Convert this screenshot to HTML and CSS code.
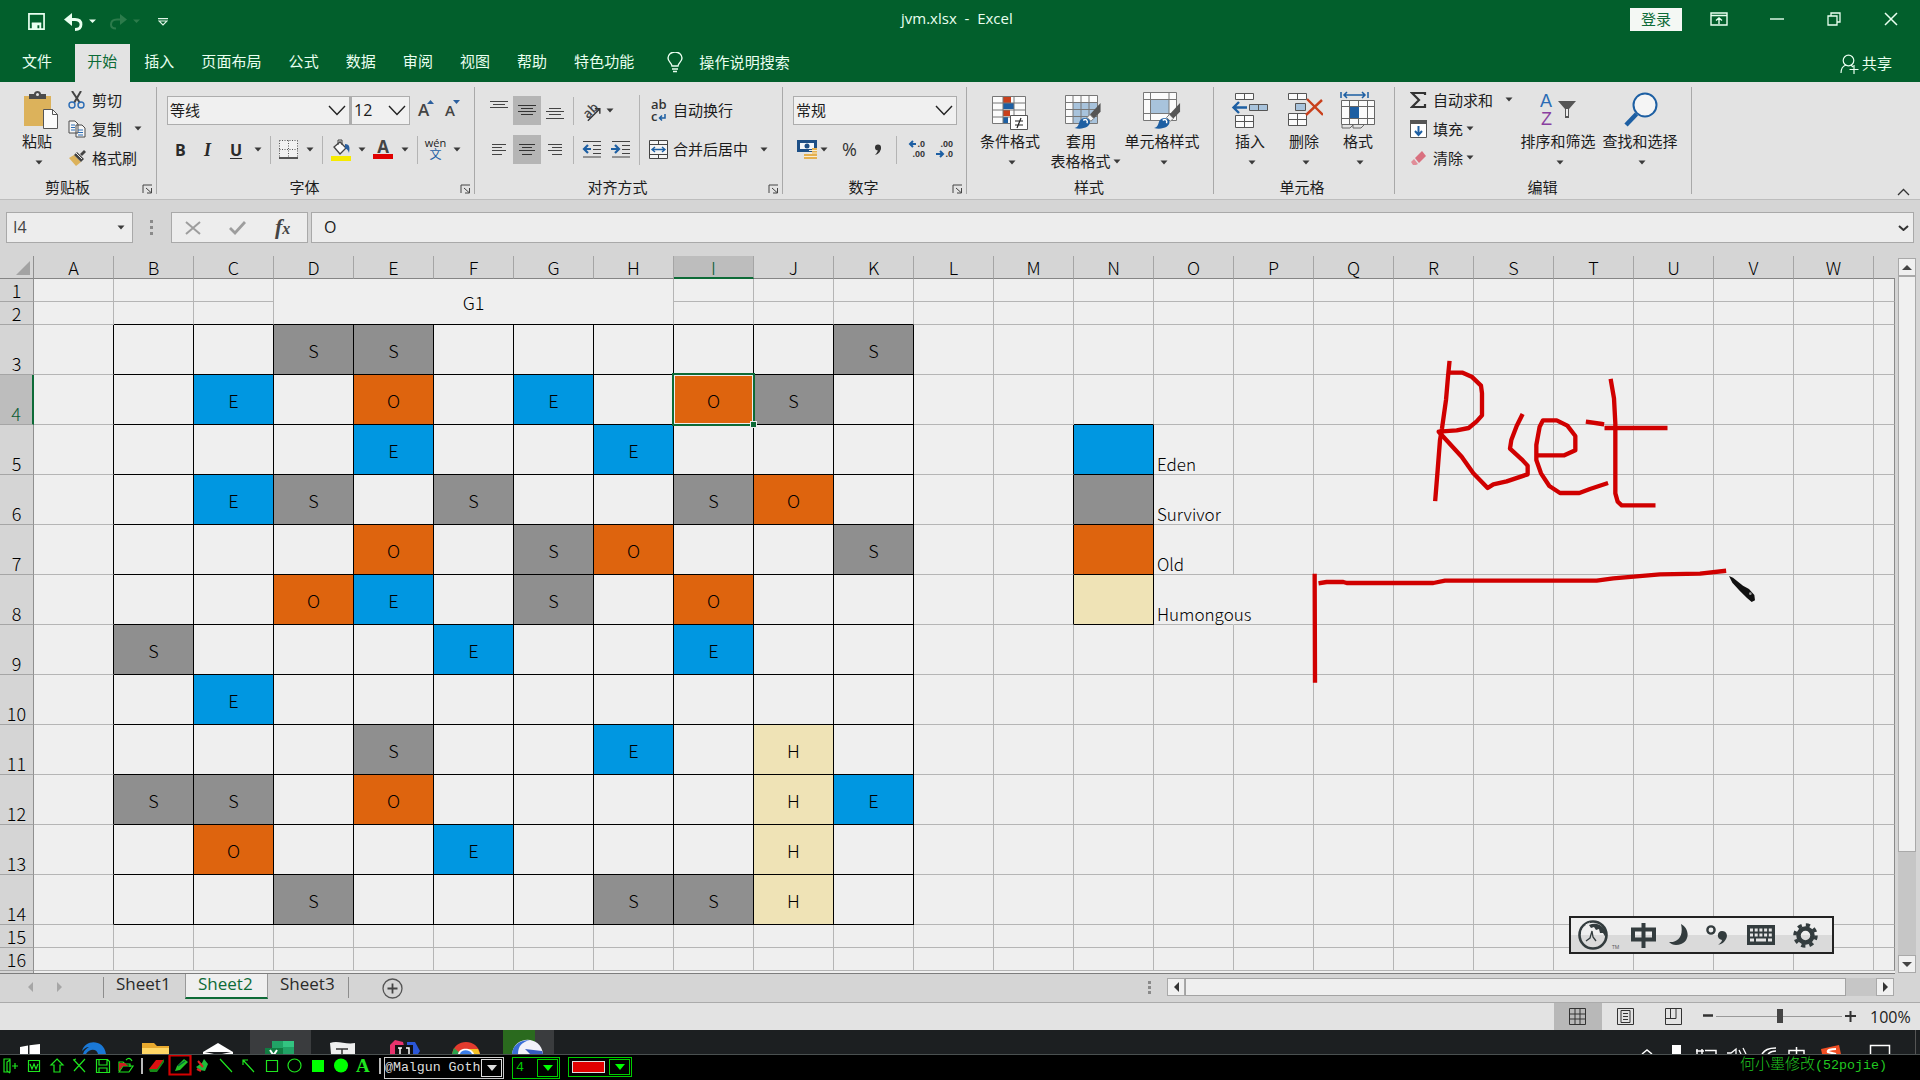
FILE: index.html
```html
<!DOCTYPE html>
<html lang="zh-CN">
<head>
<meta charset="utf-8">
<title>jvm.xlsx - Excel</title>
<link rel="stylesheet" href="styles.css">
</head>
<body>
<svg width="0" height="0" class="defs">
  <symbol id="caret" viewBox="0 0 8 5"><path d="M.5.5h7L4 4.5z" fill="#3a3a3a"/></symbol>
  <symbol id="launch" viewBox="0 0 11 10"><path d="M1 9V1h9M4 4l5 4.500M9.500 4v5H5" fill="none" stroke="#444"/></symbol>
  <symbol id="chev" viewBox="0 0 18 11"><path d="M1 1l8 8.500L17 1" fill="none" stroke="#222" stroke-width="1.400"/></symbol>
  <symbol id="brush" viewBox="0 0 28 28"><path d="M27 0v9l-7 7-4-4z" fill="#555"/><path d="M16 12l4 4-3 3-4-4z" fill="#f4f4f4" stroke="#777"/><path d="M0 26c5-1 4-5 6-8 3-4 9-3 10 1 1 6-8 9-16 7z" fill="#1d5fa3"/><path d="M9 18c3-2 5 0 4 3" fill="none" stroke="#fff" stroke-width="1.500"/></symbol>
</svg>

<header class="titlebar">
  <div class="qat">
    <svg width="17" height="17" viewBox="0 0 18 18"><path d="M1 1h16v16H1zM4 11h10" fill="none" stroke="#e9fff0" stroke-width="1.800"/><path d="M4 11h10v6h-2v-4h-2v4H4z" fill="#e9fff0"/></svg>
    <svg width="19" height="18" viewBox="0 0 19 18"><path d="M0 6.500L8 0v13z" fill="#e9fff0"/><path d="M5 6.500h6c4 0 6 2 6 5 0 3-2 5-6 5" fill="none" stroke="#e9fff0" stroke-width="2.800"/></svg>
    <svg width="7" height="5" viewBox="0 0 7 5"><path d="M0 .5h7L3.500 4z" fill="#e9fff0"/></svg>
    <svg width="19" height="18" viewBox="0 0 19 18"><path d="M18 6.500L11 1v11z" fill="#2c7b4b"/><path d="M14 6.500H8c-4 0-6 2-6 5 0 3 2 4 5 4" fill="none" stroke="#2c7b4b" stroke-width="2"/></svg>
    <svg width="7" height="5" viewBox="0 0 7 5"><path d="M0 .5h7L3.500 4z" fill="#2c7b4b"/></svg>
    <svg width="10" height="8" viewBox="0 0 10 8"><path d="M0 .7h10M1 3h8L5 7z" fill="none" stroke="#dff5e6" stroke-width="1.200"/></svg>
  </div>
  <div class="doc">jvm.xlsx &nbsp;-&nbsp; Excel</div>
  <div class="winctl">
    <span class="login">登录</span>
    <svg width="18" height="14" viewBox="0 0 18 14"><path d="M1 1h16v12H1zM1 3.500h16M9 12V6M6 8.500L9 6l3 2.500" fill="none" stroke="#e9fff0" stroke-width="1.400"/></svg>
    <svg width="14" height="14" viewBox="0 0 14 14"><path d="M0 7h14" stroke="#e9fff0" stroke-width="1.400"/></svg>
    <svg width="14" height="14" viewBox="0 0 14 14"><path d="M1 4h9v9H1zM4 4V1h9v9h-3" fill="none" stroke="#e9fff0" stroke-width="1.300"/></svg>
    <svg width="14" height="14" viewBox="0 0 14 14"><path d="M1 1l12 12M13 1L1 13" stroke="#e9fff0" stroke-width="1.500"/></svg>
  </div>
</header>

<nav class="tabs">
  <a>文件</a><a class="on">开始</a><a>插入</a><a>页面布局</a><a>公式</a><a>数据</a><a>审阅</a><a>视图</a><a>帮助</a><a>特色功能</a>
  <svg width="16" height="21" viewBox="0 0 16 21"><path d="M5 14c0-3-4-4-4-8a7 6 0 0 1 14 0c0 4-4 5-4 8zM5 17h6M6 19.500h4" fill="none" stroke="#e9fff0" stroke-width="1.400"/></svg>
  <a class="tell">操作说明搜索</a>
  <span class="share"><svg width="19" height="20" viewBox="0 0 19 20"><circle cx="8.500" cy="6.500" r="5.300" fill="none" stroke="#e9fff0" stroke-width="1.200"/><path d="M1 19c0-5 2-7 5-8M11 11l2 2M14 11v9M9.500 15.500h9" fill="none" stroke="#e9fff0" stroke-width="1.200"/></svg>共享</span>
</nav>

<section class="ribbon">
  <div class="group clip">
    <div class="body">
      <div class="big paste">
        <svg width="36" height="40" viewBox="0 0 36 40"><path d="M1 5h27v30H1z" fill="#dcb25b"/><path d="M6 8V3h5c0-4 7-4 7 0h5v5z" fill="#4b4b4b"/><circle cx="14.500" cy="3.500" r="1.500" fill="#e3e3e3"/><path d="M20.500 18.500h9l5 5v14h-14z" fill="#fbfbfb" stroke="#555"/><path d="M29.500 18.500v5h5" fill="none" stroke="#555"/></svg>
        <span>粘贴</span><svg class="caret"><use href="#caret"/></svg>
      </div>
      <div class="stack">
        <div class="item"><svg width="18" height="18" viewBox="0 0 18 18"><path d="M4 0l8 12M13 0L6 12" stroke="#444" stroke-width="2"/><circle cx="4" cy="14" r="3" fill="none" stroke="#2b6cb5" stroke-width="1.400"/><circle cx="13" cy="14" r="3" fill="none" stroke="#2b6cb5" stroke-width="1.400"/></svg><span>剪切</span></div>
        <div class="item"><svg width="18" height="18" viewBox="0 0 18 18"><path d="M1 1h6l3 3v9H1zM8 5h6l3 3v9H8z" fill="#f6f6f6" stroke="#4a4a4a"/><path d="M3 5h4M3 7.500h4M3 10h4M10 10h5M10 12.500h5M10 15h5" stroke="#2b6cb5"/></svg><span>复制</span><svg class="caret"><use href="#caret"/></svg></div>
        <div class="item"><svg width="18" height="18" viewBox="0 0 18 18"><path d="M1 9l5-3 7 7-5 4z" fill="#dcb25b"/><path d="M6 6l3-3 7 7-3 3z" fill="#444"/><path d="M12 5l4-4 2 2-4 4z" fill="#444"/><path d="M8 4l6 6" stroke="#eee"/></svg><span>格式刷</span></div>
      </div>
    </div>
    <div class="label">剪贴板</div><svg class="launch"><use href="#launch"/></svg>
  </div>

  <div class="group font">
    <div class="body rows">
      <div class="row fr1">
        <span class="combo">等线<svg width="18" height="11"><use href="#chev"/></svg></span>
        <span class="combo">12<svg width="18" height="11"><use href="#chev"/></svg></span>
        <span class="grow">A<svg width="7" height="5" viewBox="0 0 7 5"><path d="M0 4h7L3.500 0z" fill="#2b5f9e"/></svg></span>
        <span class="grow sm">A<svg width="7" height="5" viewBox="0 0 7 5"><path d="M0 0h7L3.500 4z" fill="#2b5f9e"/></svg></span>
      </div>
      <div class="row fr2">
        <b class="glyph">B</b><i class="glyph ital">I</i><u class="glyph">U</u><svg class="caret"><use href="#caret"/></svg><hr>
        <svg width="19" height="19" viewBox="0 0 19 19"><path d="M.5.5h18v18H.5z" fill="#f2f2f2"/><path d="M.5.500v17M9.500.5v17M18.500.5v17M.5.500h18M.5 9.500h18" stroke="#555" stroke-dasharray="1 1.500"/><path d="M0 18h19" stroke="#222" stroke-width="1.500"/></svg>
        <svg class="caret"><use href="#caret"/></svg><hr>
        <svg width="21" height="22" viewBox="0 0 21 22"><path d="M3 8l6-5 6 6-6 6z" fill="#fafafa" stroke="#444" stroke-width="1.300"/><path d="M7 6V1h4v5" fill="none" stroke="#444"/><path d="M14 5c5 0 5 4 4 9-1-4-3-4-4-5z" fill="#2b5f9e"/><path d="M0 17h20v5H0z" fill="#f6ea00"/></svg>
        <svg class="caret"><use href="#caret"/></svg>
        <span class="fcol">A</span>
        <svg class="caret"><use href="#caret"/></svg><hr>
        <span class="wen">wén<em>文</em></span><svg class="caret"><use href="#caret"/></svg>
      </div>
    </div>
    <div class="label">字体</div><svg class="launch"><use href="#launch"/></svg>
  </div>

  <div class="group align">
    <div class="body">
      <div class="rows">
      <div class="row ar1">
        <svg width="18" height="29" viewBox="0 0 18 29"><path d="M0 5.500h18M3 8.500h12M0 11.500h18" stroke="#444"/></svg>
        <svg class="press" width="28" height="29" viewBox="0 0 28 29"><path d="M5 9.500h18M8 12.500h12M5 15.500h18M8 18.500h12" stroke="#333"/></svg>
        <svg width="18" height="29" viewBox="0 0 18 29"><path d="M3 12.500h12M0 15.500h18M3 18.500h12M0 22.500h18" stroke="#444"/></svg><hr>
        <span class="orient">ab<svg width="18" height="18" viewBox="0 0 18 18"><path d="M4 17L16 5M11 5h5v5" fill="none" stroke="#333" stroke-width="1.400"/></svg></span><svg class="caret"><use href="#caret"/></svg>
      </div>
      <div class="row ar2">
        <svg width="15" height="12" viewBox="0 0 15 12"><path d="M0 .5h14M0 3.500h10M0 6.500h14M0 10.500h10" stroke="#444"/></svg>
        <svg class="press" width="28" height="29" viewBox="0 0 28 29"><path d="M6 9.500h16M9 12.500h10M6 15.500h16M9 19.500h10" stroke="#333"/></svg>
        <svg width="15" height="12" viewBox="0 0 15 12"><path d="M0 .5h14M4 3.500h10M0 6.500h14M4 10.500h10" stroke="#444"/></svg><hr>
        <svg width="19" height="17" viewBox="0 0 19 17"><path d="M1 .5h18M11 4.500h8M11 8.500h8M11 12.500h8M1 16h18" stroke="#444"/><path d="M9 8H2M6 4L2 8l4 4" fill="none" stroke="#1d5fa3" stroke-width="2.200"/></svg>
        <svg width="19" height="17" viewBox="0 0 19 17"><path d="M1 .5h18M11 4.500h8M11 8.500h8M11 12.500h8M1 16h18" stroke="#444"/><path d="M0 8h7M4 4l4 4-4 4" fill="none" stroke="#1d5fa3" stroke-width="2.200"/></svg>
      </div>
      </div>
      <hr class="tall">
      <div class="rows">
        <div class="row wrap"><span class="abc">ab<em>c</em><svg width="8" height="7" viewBox="0 0 8 7"><path d="M7 0v4H2M4 1.500L1.500 4 4 6.500" fill="none" stroke="#1d5fa3" stroke-width="1.500"/></svg></span><span>自动换行</span></div>
        <div class="row wrap"><svg width="19" height="19" viewBox="0 0 19 19"><path d="M.5.5h18v18H.5zM9.500.5v4M9.500 14.500v4M.5 4.500h18M.5 14.500h18" fill="#f4f4f4" stroke="#444"/><path d="M3 9.500h13M6 7L3 9.500 6 12M13 7l3 2.500L13 12" fill="none" stroke="#1d5fa3" stroke-width="1.400"/></svg><span>合并后居中</span><svg class="caret"><use href="#caret"/></svg></div>
      </div>
    </div>
    <div class="label">对齐方式</div><svg class="launch"><use href="#launch"/></svg>
  </div>

  <div class="group num">
    <div class="body rows">
      <div class="row"><span class="combo wide">常规<svg width="18" height="11"><use href="#chev"/></svg></span></div>
      <div class="row nr2">
        <svg width="21" height="20" viewBox="0 0 21 20"><path d="M0 0h20v12H0z" fill="#1d4f86"/><path d="M3 3h14v6H3z" fill="#f3f7fb"/><circle cx="10" cy="6" r="2.500" fill="#1d4f86"/><path d="M12 8h8v11h-5V8M7 14h8v5H7z" fill="#e5b04f"/><path d="M12 10.500h8M12 13h8M7 16.500h13" stroke="#f8eed5"/></svg>
        <svg class="caret"><use href="#caret"/></svg>
        <span class="pct">%</span>
        <svg width="8" height="12" viewBox="0 0 8 12"><circle cx="4" cy="3.500" r="3" fill="#333"/><path d="M7 3c0 4-2 7-6 8 2-2 3-4 3-6z" fill="#333"/></svg><hr>
        <span class="dec"><span><svg width="9" height="8" viewBox="0 0 9 8"><path d="M8 4H2M5 1L2 4l3 3" fill="none" stroke="#1d5fa3" stroke-width="2"/></svg>.0</span><span>.00</span></span>
        <span class="dec"><span>.00</span><span><svg width="9" height="8" viewBox="0 0 9 8"><path d="M0 4h6M4 1l3 3-3 3" fill="none" stroke="#1d5fa3" stroke-width="2"/></svg>.0</span></span>
      </div>
    </div>
    <div class="label">数字</div><svg class="launch"><use href="#launch"/></svg>
  </div>

  <div class="group styles">
    <div class="body">
      <div class="big w70">
        <svg width="38" height="40" viewBox="0 0 38 40"><path d="M1.500 5.500h33v27h-33z" fill="#fbfbfb"/><path d="M12 6h8v6h-8M12 19h7v6h-7z" fill="#c9401c"/><path d="M12 12h11v6H12M12 26h5v6h-5z" fill="#1d5fa3"/><path d="M1.500 5.500h33v27h-33zM12 5v27M23 5v27M1 12h34M1 19h34M1 26h34" fill="none" stroke="#777"/><path d="M19.500 24.500h17v14h-17z" fill="#fff" stroke="#555"/><path d="M24 30h8M24 34h8M30 27l-4 10" stroke="#222" stroke-width="1.200"/></svg>
        <span>条件格式</span><svg class="caret"><use href="#caret"/></svg>
      </div>
      <div class="big w70">
        <svg width="38" height="40" viewBox="0 0 38 40"><path d="M1.500 4.500h32v28h-32z" fill="#fbfbfb"/><path d="M9 12h24v20H9z" fill="#a8c3dc"/><path d="M1.500 4.500h32v28h-32zM9 4v28M17 4v28M25 4v28M1 11.500h33M1 18.500h33M1 25.500h33" fill="none" stroke="#777"/><use href="#brush" x="10" y="12" width="28" height="27"/></svg>
        <span>套用</span><span class="two">表格格式<svg class="caret"><use href="#caret"/></svg></span>
      </div>
      <div class="big w80">
        <svg width="38" height="40" viewBox="0 0 38 40"><path d="M.5 1.500h33v28H.5z" fill="#fbfbfb"/><path d="M8 9h18v13H8z" fill="#a8c3dc"/><path d="M.5 1.500h33v28H.5zM7.500 1v28M26 1v28M0 8.500h34M0 22.500h34" fill="none" stroke="#777"/><use href="#brush" x="11" y="12" width="27" height="27"/></svg>
        <span>单元格样式</span><svg class="caret"><use href="#caret"/></svg>
      </div>
    </div>
    <div class="label">样式</div>
  </div>

  <div class="group cells">
    <div class="body">
      <div class="big">
        <svg width="38" height="40" viewBox="0 0 38 40"><path d="M4.500 2.500h18v6h-18zM4.500 24.500h18v12h-18zM13.500 2v6M13.500 24v12M4 30.500h18" fill="#fbfbfb" stroke="#555"/><path d="M18.500 13.500h18v6h-18zM27.500 13v6" fill="#a8c3dc" stroke="#555"/><path d="M16 16.500H3M8 11l-5.500 5.500L8 22" fill="none" stroke="#1d5fa3" stroke-width="2.400"/></svg>
        <span>插入</span><svg class="caret"><use href="#caret"/></svg>
      </div>
      <div class="big">
        <svg width="38" height="40" viewBox="0 0 38 40"><path d="M3.500 2.500h18v6h-18zM3.500 22.500h18v12h-18zM12.500 2v6M12.500 22v12M3 28.500h18" fill="#fbfbfb" stroke="#555"/><path d="M10.500 12.500h10v7h-10z" fill="#a8c3dc" stroke="#555"/><path d="M22 8l16 16M37 9L21 24" stroke="#c9401c" stroke-width="2.400"/></svg>
        <span>删除</span><svg class="caret"><use href="#caret"/></svg>
      </div>
      <div class="big">
        <svg width="38" height="40" viewBox="0 0 38 40"><path d="M2 1v6M29 1v6M5 4h21M8 1L5 4l3 3M23 1l3 3-3 3" fill="none" stroke="#1d5fa3" stroke-width="1.500"/><path d="M2.500 9.500h33v24h-33z" fill="#fbfbfb"/><path d="M2.500 9.500h33v24h-33zM10.500 9v24M28.500 9v24M19.500 9v7M19.500 27v6M2 15.500h33M2 27.500h33M3 34v3h8l3-3v3h8l3-3" fill="none" stroke="#666"/><path d="M11 16h9v11h-9z" fill="#1d5fa3"/></svg>
        <span>格式</span><svg class="caret"><use href="#caret"/></svg>
      </div>
    </div>
    <div class="label">单元格</div>
  </div>

  <div class="group edit">
    <div class="body">
      <div class="stack">
        <div class="item"><svg width="17" height="18" viewBox="0 0 17 18"><path d="M15 4V2H2l7 7-7 7h13v-3" fill="none" stroke="#333" stroke-width="2.200"/></svg><span>自动求和</span><svg class="caret"><use href="#caret"/></svg></div>
        <div class="item"><svg width="17" height="18" viewBox="0 0 17 18"><path d="M.5.5h16v17H.5z" fill="#fff" stroke="#555"/><path d="M0 0h17v4H0z" fill="#555"/><path d="M8.500 6v9M5 11l3.500 4 3.500-4" fill="none" stroke="#1d5fa3" stroke-width="2"/></svg><span>填充</span><svg class="caret"><use href="#caret"/></svg></div>
        <div class="item"><svg width="17" height="18" viewBox="0 0 17 18"><path d="M5 9l7-7 4 5-7 7z" fill="#d9707f"/><path d="M4 10l4 5-2 1H3l-2-3z" fill="#e08d98"/></svg><span>清除</span><svg class="caret"><use href="#caret"/></svg></div>
      </div>
      <div class="big w82">
        <svg width="36" height="40" viewBox="0 0 36 40"><path d="M18 10h18l-7 8v9h-4v-9z" fill="#555"/><path d="M26 18h2v7h-2z" fill="#eee"/><text x="0" y="16" class="sa">A</text><text x="1" y="34" class="sz">Z</text></svg>
        <span>排序和筛选</span><svg class="caret"><use href="#caret"/></svg>
      </div>
      <div class="big w82">
        <svg width="36" height="40" viewBox="0 0 36 40"><circle cx="23" cy="14" r="11.500" fill="#f5f5f5" stroke="#1d5fa3" stroke-width="2"/><path d="M14.500 23L4 34" stroke="#1d5fa3" stroke-width="4.500"/></svg>
        <span>查找和选择</span><svg class="caret"><use href="#caret"/></svg>
      </div>
    </div>
    <div class="label">编辑</div>
  </div>
  <svg class="collapse" width="13" height="8" viewBox="0 0 13 8"><path d="M1 7l5.500-5.500L12 7" fill="none" stroke="#333" stroke-width="1.300"/></svg>
</section>

<section class="formula">
  <div class="namebox">I4<svg class="caret"><use href="#caret"/></svg></div>
  <svg class="dots" width="3" height="15" viewBox="0 0 3 15"><path d="M0 0h3v3H0zM0 6h3v3H0zM0 12h3v3H0z" fill="#8a8a8a"/></svg>
  <div class="fxbox">
    <svg width="16" height="14" viewBox="0 0 16 14"><path d="M1 1l14 12M15 1L1 13" stroke="#9d9d9d" stroke-width="2"/></svg>
    <svg width="17" height="14" viewBox="0 0 17 14"><path d="M1 7l5 5L16 1" fill="none" stroke="#9d9d9d" stroke-width="2.800"/></svg>
    <span class="fx">f<small>x</small></span>
  </div>
  <div class="input">O<svg width="11" height="6" viewBox="0 0 11 6"><path d="M1 1l4.500 4L10 1" fill="none" stroke="#333" stroke-width="2"/></svg></div>
</section>

<main class="work">
  <div class="sheet">
  <table>
  <colgroup><col class="c0"><col span="23" class="cw"><col class="cx"></colgroup>
  <tr class="head"><th class="corner"><svg width="14" height="14" viewBox="0 0 14 14"><path d="M14 0v14H0z" fill="#a3a3a3"/></svg><th>A<th>B<th>C<th>D<th>E<th>F<th>G<th>H<th class="cur">I<th>J<th>K<th>L<th>M<th>N<th>O<th>P<th>Q<th>R<th>S<th>T<th>U<th>V<th>W<th class="last">
  <tr class="low"><th>1<td><td><td><td class="kb merged" colspan="5" rowspan="2">G1
    <td><td><td>
    <td><td><td><td><td> <td><td><td><td><td> <td><td><td>
  <tr class="low"><th>2<td><td class="kb"><td class="kb"><td class="kb"><td class="kb"><td class="kb">
    <td><td><td><td><td> <td><td><td><td><td> <td><td><td>
  <tr><th>3<td class="kr"><td class="k"><td class="k"><td class="k s">S<td class="k s">S<td class="k"><td class="k"><td class="k"><td class="k"><td class="k"><td class="k s">S
    <td><td><td><td><td> <td><td><td><td><td> <td><td><td>
  <tr><th class="cur">4<td class="kr"><td class="k"><td class="k e">E<td class="k"><td class="k o">O<td class="k"><td class="k e">E<td class="k"><td class="k o sel">O<td class="k s">S<td class="k">
    <td><td><td class="kb"><td><td> <td><td><td><td><td> <td><td><td>
  <tr><th>5<td class="kr"><td class="k"><td class="k"><td class="k"><td class="k e">E<td class="k"><td class="k"><td class="k e">E<td class="k"><td class="k"><td class="k">
    <td><td class="kr"><td class="k e"><td class="t">Eden<td> <td><td><td><td><td> <td><td><td>
  <tr><th>6<td class="kr"><td class="k"><td class="k e">E<td class="k s">S<td class="k"><td class="k s">S<td class="k"><td class="k"><td class="k s">S<td class="k o">O<td class="k">
    <td><td class="kr"><td class="k s"><td class="t">Survivor<td> <td><td><td><td><td> <td><td><td>
  <tr><th>7<td class="kr"><td class="k"><td class="k"><td class="k"><td class="k o">O<td class="k"><td class="k s">S<td class="k o">O<td class="k"><td class="k"><td class="k s">S
    <td><td class="kr"><td class="k o"><td class="t">Old<td> <td><td><td><td><td> <td><td><td>
  <tr><th>8<td class="kr"><td class="k"><td class="k"><td class="k o">O<td class="k e">E<td class="k"><td class="k s">S<td class="k"><td class="k o">O<td class="k"><td class="k">
    <td><td class="kr"><td class="k h"><td class="t spill">Humongous<td> <td><td><td><td><td> <td><td><td>
  <tr><th>9<td class="kr"><td class="k s">S<td class="k"><td class="k"><td class="k"><td class="k e">E<td class="k"><td class="k"><td class="k e">E<td class="k"><td class="k">
    <td><td><td><td><td> <td><td><td><td><td> <td><td><td>
  <tr><th>10<td class="kr"><td class="k"><td class="k e">E<td class="k"><td class="k"><td class="k"><td class="k"><td class="k"><td class="k"><td class="k"><td class="k">
    <td><td><td><td><td> <td><td><td><td><td> <td><td><td>
  <tr><th>11<td class="kr"><td class="k"><td class="k"><td class="k"><td class="k s">S<td class="k"><td class="k"><td class="k e">E<td class="k"><td class="k h">H<td class="k">
    <td><td><td><td><td> <td><td><td><td><td> <td><td><td>
  <tr><th>12<td class="kr"><td class="k s">S<td class="k s">S<td class="k"><td class="k o">O<td class="k"><td class="k"><td class="k"><td class="k"><td class="k h">H<td class="k e">E
    <td><td><td><td><td> <td><td><td><td><td> <td><td><td>
  <tr><th>13<td class="kr"><td class="k"><td class="k o">O<td class="k"><td class="k"><td class="k e">E<td class="k"><td class="k"><td class="k"><td class="k h">H<td class="k">
    <td><td><td><td><td> <td><td><td><td><td> <td><td><td>
  <tr><th>14<td class="kr"><td class="k"><td class="k"><td class="k s">S<td class="k"><td class="k"><td class="k"><td class="k s">S<td class="k s">S<td class="k h">H<td class="k">
    <td><td><td><td><td> <td><td><td><td><td> <td><td><td>
  <tr class="low"><th>15<td> <td><td><td><td><td> <td><td><td><td><td>
    <td><td><td><td><td> <td><td><td><td><td> <td><td><td>
  <tr class="low"><th>16<td> <td><td><td><td><td> <td><td><td><td><td>
    <td><td><td><td><td> <td><td><td><td><td> <td><td><td>
  </table>
  </div>
  <div class="vscroll">
    <span class="arrow"><svg width="10" height="5" viewBox="0 0 10 5"><path d="M0 5h10L5 0z" fill="#444"/></svg></span>
    <span class="thumb"></span>
    <span class="arrow"><svg width="10" height="5" viewBox="0 0 10 5"><path d="M0 0h10L5 5z" fill="#444"/></svg></span>
  </div>

  <svg class="ink" width="520" height="360" viewBox="0 0 1560 1080">
    <g fill="none" stroke="#d00000" stroke-width="13" stroke-linecap="square" stroke-linejoin="round">
      <path d="M508 69L504 110L498 180L486 265L480 300L473 390L466 477"/>
      <path d="M508 98H548L575 110L603 137L606 160V226L590 244L566 264L530 271L476 275L490 290L545 350L580 400L623 444L640 433L680 424L743 403V377L725 358L690 326L694 300L710 258L725 228"/>
      <path d="M778 346H853L886 331V288L862 257L830 241H789L779 260L769 315V360L783 400L808 438L840 459H898L930 447L978 431"/>
      <path d="M993 123L1002 175L1006 250V460L1013 485L1025 496H1120"/>
      <path d="M924 246L966 252M980 264H1156"/>
      <path d="M104 708L105 1022M122 729L140 726H190L200 729H460L495 722H950L1000 715L1140 703L1260 701L1332 693"/>
    </g>
    <path d="M1347 708l12 5 30 24 18 10 16 18 2 16-10 5-14-12-22-22-22-24z" fill="#111"/><circle cx="1411" cy="761" r="4" fill="#999"/>
  </svg>

  <div class="ime">
    <svg width="44" height="32" viewBox="0 0 44 32"><circle cx="16" cy="16" r="13.500" fill="none" stroke="#333c3e" stroke-width="2.600"/><path d="M12 6c7-3 13 0 16 5l1 8-3-5-3 0-1-4-3 1-2-3-3 1z" fill="#333c3e"/><path d="M9 22l4-3 2-7 1 6 3 4M4 10l5-5" fill="none" stroke="#333c3e" stroke-width="1.300"/><path d="M4.500 15C5 8 9 5 13 4" stroke="#eee" fill="none"/><text x="35" y="30" class="tm">TM</text></svg>
    <svg width="25" height="26" viewBox="0 0 25 26"><path d="M2 7.500h21v10H2zM12.500 1v25" fill="none" stroke="#333c3e" stroke-width="4"/></svg>
    <svg width="20" height="24" viewBox="0 0 20 24"><path d="M12 1c10 5 9 21-5 21-3 0-5-1-7-3C8 20 15 14 12 1z" fill="#333c3e"/></svg>
    <svg width="22" height="22" viewBox="0 0 22 22"><circle cx="5" cy="6" r="3.600" fill="none" stroke="#333c3e" stroke-width="2.400"/><path d="M16 7c5 0 6 5 4 8-2 4-5 5-8 6 2-2 4-3 4-5-6-1-5-9 0-9z" fill="#333c3e"/></svg>
    <svg width="28" height="20" viewBox="0 0 28 20"><path d="M0 0h28v20H0z" fill="#333c3e"/><path d="M3 5h22M3 10h22" stroke="#e6e6e6" stroke-width="3" stroke-dasharray="3 1.700"/><path d="M3 15h4M9 15h10M21 15h4" stroke="#e6e6e6" stroke-width="3"/></svg>
    <svg width="25" height="25" viewBox="0 0 25 25"><circle cx="12.500" cy="12.500" r="7" fill="none" stroke="#333c3e" stroke-width="4.500"/><circle cx="12.500" cy="12.500" r="10.500" fill="none" stroke="#333c3e" stroke-width="3.500" stroke-dasharray="4.200 4.050"/></svg>
  </div>
</main>

<section class="sheetbar">
  <svg class="nav" width="36" height="12" viewBox="0 0 36 12"><path d="M6 1v10L1 6zM30 1v10l5-5z" fill="#a6a6a6"/></svg>
  <a>Sheet1</a><a class="on">Sheet2</a><a class="end">Sheet3</a>
  <svg class="plus" width="21" height="21" viewBox="0 0 21 21"><circle cx="10.500" cy="10.500" r="9.500" fill="none" stroke="#555" stroke-width="1.300"/><path d="M5.500 10.500h10M10.500 5.500v10" stroke="#444" stroke-width="1.800"/></svg>
  <div class="hscroll">
    <svg class="dots" width="3" height="13" viewBox="0 0 3 13"><path d="M0 0h3v3H0zM0 5h3v3H0zM0 10h3v3H0z" fill="#8a8a8a"/></svg>
    <span class="arrow"><svg width="5" height="10" viewBox="0 0 5 10"><path d="M5 0v10L0 5z" fill="#333"/></svg></span>
    <span class="track"><span class="hthumb"></span></span>
    <span class="arrow"><svg width="5" height="10" viewBox="0 0 5 10"><path d="M0 0v10l5-5z" fill="#333"/></svg></span>
  </div>
</section>

<footer class="status">
  <span class="view on"><svg width="17" height="17" viewBox="0 0 17 17"><path d="M.5.5h16v16H.5zM6 0v17M11 0v17M0 6h17M0 11h17" fill="none" stroke="#333"/></svg></span>
  <span class="view"><svg width="17" height="17" viewBox="0 0 17 17"><path d="M.5.5h16v16H.5zM4 2.500h9v12H4zM6 5.500h5M6 8.500h5M6 11.500h5" fill="none" stroke="#333"/></svg></span>
  <span class="view"><svg width="17" height="17" viewBox="0 0 17 17"><path d="M.5.5h16v16H.5zM5.500 1v9.500M11 1v9.500M1 10.500h10" fill="none" stroke="#333"/></svg></span>
  <svg class="zoom" width="154" height="17" viewBox="0 0 154 17"><path d="M0 7.500h10" stroke="#333" stroke-width="2.500"/><path d="M13 8.500h126" stroke="#999"/><path d="M74 1h6v14h-6z" fill="#444"/><path d="M142 8h11M147.500 3v11" stroke="#333" stroke-width="2"/></svg>
  <span class="pc">100%</span>
</footer>

<div class="taskbar">
  <svg width="70" height="24" viewBox="0 0 70 24"><path d="M20 17l8-1.500V24h-8zM29.500 15.300L40 14v10H29.500z" fill="#fff"/></svg>
  <svg width="60" height="24" viewBox="0 0 60 24"><path d="M12 21c3-12 22-12 24 3h-8c-1-5-8-6-12 0h-3c1-4 4-6 6-7-3 0-5 2-7 4z" fill="#1a78d6"/></svg>
  <svg width="60" height="24" viewBox="0 0 60 24"><path d="M12 13h12l3 3h12v8H12z" fill="#e8a92e"/><path d="M12 18h27v6H12z" fill="#ffd766"/></svg>
  <svg width="60" height="24" viewBox="0 0 60 24"><path d="M13 22l15-9 15 9v2H13z" fill="#fff"/><path d="M15 22h26l-9 2h-8z" fill="#1c1f21"/></svg>
  <svg class="hl" width="61" height="24" viewBox="0 0 61 24"><path d="M22 11h22v13H22z" fill="#21a366"/><path d="M33 11h11v6H33z" fill="#33c481"/><path d="M15 18h18v6H15z" fill="#107c41"/><path d="M20 20l4 6M27 20l-4 6" stroke="#fff" stroke-width="2"/></svg>
  <svg width="68" height="24" viewBox="0 0 68 24"><path d="M19 13c8-3 16 2 25 0v11H20z" fill="#eee"/><path d="M25 19h12M31 19v5" stroke="#333" stroke-width="1.500"/></svg>
  <svg width="60" height="24" viewBox="0 0 60 24"><path d="M11 15l5-5 8 2 3 12H11z" fill="#e8336d"/><path d="M28 12l8 0 5 9-2 3H28z" fill="#2b57d8"/><path d="M16 15h18v9H16z" fill="#111"/><path d="M19 18h4M21 18v6M27 18h3v6" stroke="#fff" stroke-width="1.500" fill="none"/></svg>
  <svg width="64" height="24" viewBox="0 0 64 24"><path d="M13 24c2-16 26-16 28 0z" fill="#e23b2e"/><path d="M13 24l2-6 7 6z" fill="#2aa24a"/><path d="M30 19h9l2 5H31z" fill="#f6c326"/><path d="M19 24c1-7 14-7 16 0z" fill="#fff"/><path d="M21 24c1-5 10-5 12 0z" fill="#3b7de8"/></svg>
  <svg width="51" height="24" viewBox="0 0 51 24"><path d="M0 0h32v24H0z" fill="#2a6a1e"/><path d="M32 0h19v24H32z" fill="#3a3c3e"/><path d="M9 24c2-19 29-19 31 0z" fill="#f2f2fa"/><path d="M9 24c1-10 9-14 18-14-8 2-12 6-12 14z" fill="#3a6fd8"/><path d="M22 19l17 2 1 3H27z" fill="#365cc0"/></svg>
  <svg class="tray" width="290" height="24" viewBox="0 0 290 24"><path d="M12 24l5-4 5 4" fill="none" stroke="#fff" stroke-width="1.500"/><path d="M42 15h9v9h-9z" fill="#fff"/><path d="M67 24v-5M72 24v-5M66 21h8M75 20.500h11V24" fill="none" stroke="#fff" stroke-width="1.500"/><path d="M97 23h4l5-4v5M109 20l2 4M113 18l3 6" fill="none" stroke="#fff" stroke-width="1.300"/><path d="M132 24c3-4 6-6 14-6M138 24c2-2 4-3 8-3" fill="none" stroke="#fff" stroke-width="1.600"/><path d="M159 24v-3.500h15V24M166.500 17v7" fill="none" stroke="#fff" stroke-width="1.500"/><path d="M191 19l18-4 2 9h-19z" fill="#f04e23"/><path d="M206 19c-5 0-9 1-8 3l8 2" fill="none" stroke="#fff" stroke-width="2.200"/><path d="M240.500 24v-8.500h19V24" fill="none" stroke="#fff" stroke-width="1.500"/><path d="M285.500 0v24" stroke="#555"/></svg>
</div>

<div class="pen">
  <svg width="382" height="25" viewBox="0 0 382 25">
    <g fill="none" stroke="#1fe51f" stroke-width="1.200">
      <path d="M4 4h6v13H4zM10 5l-3 2v9l3 2M12 11h6M15 8v6"/><path d="M28.500 5.500h11v11h-11zM30 9l2 5 2-5 2 5 2-5"/><path d="M57 4l6 6h-3v7h-6v-7h-3z"/><path d="M74 5l11 12M85 4L74 16M73 5l3-1"/><path d="M96.500 4.500h11l2 2v11h-13zM99 5v5h8V5M99 17v-4h8v4"/><path d="M119 16V7h4l2 2h5v3M119 17l4-6h10l-4 6zM126 5c3-3 5-1 6 1"/>
    </g>
    <path d="M119 8h6l3 3h-5l-4 5z" fill="#c22"/><path d="M142 3v16M380 3v16" stroke="#e8e8e8" stroke-width="1.600"/>
    <path d="M149 14l7-9h8l-7 10z" fill="#d11"/><path d="M149 14h8l7-10v3l-7 10h-7z" fill="#178a17"/>
    <path d="M169.500.5h21v19h-21z" fill="none" stroke="#d40000" stroke-width="2.200"/><path d="M175 16l2-5 7-7 4 3-8 8z" fill="#24c424"/><path d="M178 11l7-5" stroke="#064" stroke-width="1.500"/>
    <path d="M196 12l6-4 2-4 4 5-3 7-5-1z" fill="#1fbd3a"/><path d="M198 6l5 6M197 14l4 2" stroke="#d22" stroke-width="2"/>
    <g fill="none" stroke="#1fe51f" stroke-width="1.200"><path d="M220 4l12 13M243 5l11 12M243 10V5h5M266.500 5.500h11v11h-11z"/><circle cx="294.500" cy="10.500" r="6.500"/></g>
    <path d="M312 5h12v12h-12z" fill="#0f0"/><circle cx="341" cy="10.500" r="7" fill="#0f0"/>
    <text x="356" y="17" class="pa">A</text>
  </svg>
  <span class="pfont"><span>@Malgun Goth</span><em><svg width="10" height="6" viewBox="0 0 10 6"><path d="M0 0h10L5 6z" fill="#ddd"/></svg></em></span>
  <span class="psize"><span>4</span><em><svg width="10" height="6" viewBox="0 0 10 6"><path d="M0 0h10L5 6z" fill="#0f0"/></svg></em></span>
  <span class="pcolor"><b></b><em><svg width="10" height="6" viewBox="0 0 10 6"><path d="M0 0h10L5 6z" fill="#0f0"/></svg></em></span>
  <span class="credit"><span class="cn">何小墨修改</span>(52pojie)</span>
</div>
</body>
</html>
```
FILE: styles.css
```css
* { box-sizing: border-box; }
body {
  margin: 0; width: 1920px; height: 1080px; overflow: hidden;
  display: flex; flex-direction: column;
  font: 15px/20px "Noto Sans CJK SC", sans-serif; color: #1c1c1c; background: #d5d5d5;
}
svg { display: block; flex: none; }
.defs { position: absolute; }
hr { margin: 0; border: 0; width: 1px; height: 28px; background: #b4b4b4; }
.caret { width: 8px; height: 5px; }

/* title bar */
.titlebar { height: 44px; flex: none; background: #025f2c; display: grid; grid-template-columns: 901px 1fr 291px; color: #e9fff0; }
.qat { display: grid; grid-template-columns: 36px 25px 20px 24px 25px 10px; padding: 0 0 1px 28px; align-items: center; }
.doc { font: 15px/36px "Open Sans", sans-serif; white-space: pre; }
.winctl { display: grid; grid-template-columns: 81px 60px 57px 57px 35px; height: 38px; align-items: center; }
.login { width: 52px; height: 23px; margin-left: 1px; background: #f4f8f4; color: #0d6b37; text-align: center; line-height: 22px; }

.tabs { height: 38px; flex: none; background: #025f2c; display: flex; color: #e9fff0; padding-left: 11px; line-height: 34px; letter-spacing: .1px; }
.tabs a { padding: 0 11px; margin-right: 4.9px; }
.tabs a:first-child { margin-right: 12px; }
.tabs a.on { background: #e3e3e3; color: #0d6b37; margin-right: 3px; width: 55px; padding: 0 0 0 12px; }
.tabs svg { margin: 8px 0 0 17px; }
.tabs a.tell { padding-left: 16px; line-height: 36px; }
.share { margin-left: auto; margin-right: 28px; display: flex; line-height: 37px; gap: 3px; }
.tabs .share svg { margin: 10px 0 0; }

/* ribbon */
.ribbon { height: 118px; flex: none; background: #e3e3e3; border-bottom: 1px solid #bdbdbd; display: flex; position: relative; }
.group { position: relative; height: 117px; display: flex; flex-direction: column; }
.group::after { content: ""; position: absolute; right: 0; top: 5px; width: 1px; height: 107px; background: #a9a9a9; }
.body { height: 93px; display: flex; }
.label { text-align: center; line-height: 25px; }
.launch { position: absolute; right: 4px; bottom: 5px; width: 11px; height: 10px; }
.collapse { position: absolute; right: 10px; bottom: 3px; }
.clip { width: 157px; } .clip .label { padding-right: 22px; }
.font { width: 318px; } .font .label { padding-right: 23px; }
.align { width: 308px; } .align .label { padding-right: 23px; }
.num { width: 184px; } .num .label { padding-right: 23px; }
.styles { width: 247px; } .styles .label { padding-right: 3px; }
.cells { width: 181px; } .cells .label { padding-right: 5px; }
.edit { width: 297px; } .edit .label { padding-right: 2px; }

.big { display: flex; flex-direction: column; align-items: center; padding-top: 9px; white-space: nowrap; }
.big > svg:first-child { height: 40px; }
.big .caret { margin: 9px 0 0 4px; }
.big.paste { padding-left: 16px; width: 64px; }
.big.paste > span { margin-left: -6px; }
.big.paste .caret { margin-left: -2px; }
.big.paste > svg:first-child { margin-left: 2px; }
.big .two { display: flex; margin-left: 9px; line-height: 19px; }
.big .two .caret { margin: 8px 0 0 2px; }
.styles .body { padding-left: 8px; }
.styles .w70 { width: 70px; }
.styles .w70:nth-child(2) { margin-left: 1px; }
.styles .w70:nth-child(2) > svg { margin-left: 4px; }
.styles .w80 { width: 80px; margin-left: 6px; }
.cells .body { padding-left: 9px; }
.cells .big { width: 54px; }
.edit .w82 { width: 82px; }
.stack { display: flex; flex-direction: column; padding-top: 3px; }
.item { height: 29px; display: flex; align-items: center; }
.item .caret { margin-left: 3px; }
.clip .stack { padding-left: 4px; }
.clip .item span { margin-left: 6px; }
.clip .item .caret { margin-left: 12px; }
.edit .stack { padding-left: 15px; width: 122px; }
.edit .item span { margin-left: 6px; }
.edit .item:first-child .caret { margin-left: 12px; }
.sa, .sz { font: 18px "Liberation Sans", sans-serif; fill: #2b6cb5; }
.sz { fill: #8a3fa0; }

.rows { display: flex; flex-direction: column; padding-top: 14px; gap: 10px; }
.row { height: 29px; display: grid; align-items: center; justify-items: start; white-space: nowrap; }
.row > span { margin-top: -2px; }
.row > span.combo { margin-top: 0; }
.combo { height: 29px; width: 100%; border: 1px solid #adadad; background: #f0f0f0; display: flex; align-items: center; justify-content: space-between; padding: 0 3px 1px 2px; }
.fr1 { grid-template-columns: 183px 60px 27px 20px; padding-left: 10px; }
.fr1 .combo + .combo { border-left-width: 2px; font: 16px "Open Sans", sans-serif; }
.grow { font: 600 17px/20px "Open Sans", sans-serif; color: #444; display: flex; padding-left: 8px; }
.grow svg { margin-left: -2px; }
.grow.sm { font-size: 15px; }
.fr2 { grid-template-columns: 29px 26px 24px 16px 9px 27px 16px 9px 27px 15px 28px 16px 10px 26px 10px; padding-left: 18px; }
.glyph { font: 700 16px/20px "Open Sans", sans-serif; color: #2a2a2a; }
.ital { font: italic 700 18px/20px "Liberation Serif", serif; }
u.glyph { text-underline-offset: 2px; }
.fcol { width: 20px; font: 700 17px/15px "Open Sans", sans-serif; text-align: center; border-bottom: 5px solid #e00000; color: #444; height: 20px; }
.wen { font: 11px/11px "Open Sans", sans-serif; display: flex; flex-direction: column; width: 17px; align-items: center; }
.wen em { font: 12px/12px "Noto Sans CJK SC", sans-serif; color: #1d5fa3; }
.align .body { padding-left: 15px; }
.ar1 { grid-template-columns: 23px 33px 27px 10px 23px 8px; }
.ar2 { grid-template-columns: 21px 35px 25px 9px 29px 20px; padding-left: 2px; }
.press { background: #b5b5b5; }
.tall { height: 70px; margin: 13px 0 0 16px; }
.align .body > .rows:first-child { width: 133px; }
.wrap { grid-template-columns: 24px 87px 10px; padding-left: 9px; }
.orient { display: flex; font: 600 13px/16px "Open Sans", sans-serif; width: 20px; height: 20px; transform: rotate(-45deg); color: #444; }
.orient svg { transform: rotate(45deg) translate(-3px, 7px); margin-left: -10px; }
.abc { font: 600 13px/12px "Open Sans", sans-serif; color: #333; width: 18px; display: flex; flex-wrap: wrap; padding-left: 2px; }
.abc em { font-style: normal; margin-right: 1px; }
.abc svg { margin-top: 4px; }
.num .rows { padding-left: 10px; }
.combo.wide { width: 164px; }
.nr2 { grid-template-columns: 23px 22px 32px 22px 11px 28px 18px; padding-left: 4px; }
.pct { font: 18px/20px "Open Sans", sans-serif; color: #333; }
.dec { font: 700 9px/10px "Liberation Sans", sans-serif; width: 18px; display: flex; flex-direction: column; align-items: flex-end; color: #333; }
.dec span { display: flex; align-items: center; height: 10px; }

/* formula bar */
.formula { height: 56px; flex: none; display: flex; padding: 12px 6px 13px; font: 16px/29px "Open Sans", sans-serif; }
.namebox, .fxbox, .input { border: 1px solid #a9a9a9; background: #ededed; display: flex; align-items: center; }
.namebox { width: 127px; justify-content: space-between; padding: 0 7px 0 6px; color: #444; }
.formula .dots { margin: 8px 18px 0 17px; }
.fxbox { width: 137px; padding-left: 13px; }
.fxbox svg + svg { margin-left: 28px; }
.fx { font: italic 700 22px/29px "Liberation Serif", serif; color: #444; margin-left: 29px; }
.fx small { font-size: 16px; }
.input { margin-left: 3px; width: 1604px; justify-content: space-between; padding: 0 4px 0 12px; }

/* worksheet */
.work { height: 718px; flex: none; display: flex; position: relative; }
.sheet { width: 1895px; height: 718px; background: linear-gradient(90deg, #d5d5d5 33px, #8f8f8f 33px, #8f8f8f 34px, #efefef 34px); border-bottom: 1px solid #7d7d7d; }
table { table-layout: fixed; width: 1895px; border-spacing: 0; font: 300 18px/20px "Noto Sans CJK SC", sans-serif; color: #000; }
.c0 { width: 34px; } .cw { width: 80px; } .cx { width: 21px; }
th, td { padding: 0; height: 50px; border: solid #b5b5b5; border-width: 0 1px 1px 0; text-align: center; }
td { background: #efefef; }
th { font-weight: 300; background: #d5d5d5; border-color: #a5a5a5; vertical-align: bottom; }
tr > th:first-child { border-right-color: #8f8f8f; padding-bottom: 1px; }
.low > * { height: 23px; line-height: 20px; }
.head th { height: 23px; border-bottom-color: #858585; line-height: 19px; vertical-align: bottom; padding-bottom: 1px; }
.head .corner { padding: 0 3px 3px 16px; }
.head .last { border-right: 0; }
td:last-child { border-right-color: #8a8a8a; }
.head .cur { background: #bdbdbd; color: #0d5c34; border-bottom: 2px solid #0d6b37; line-height: 18px; }
th.cur:first-child { background: #bdbdbd; color: #0d5c34; border-right: 2px solid #0d6b37; }
.k, .kr { border-right-color: #000; }
.k, .kb { border-bottom-color: #000; }
.e { background: #0097e1; } .o { background: #de640e; } .s { background: #8f8f8f; } .h { background: #efe3b6; }
.sel { position: relative; }
.sel::before { content: ""; position: absolute; inset: -2px; border: 2px solid #0d6b37; box-shadow: inset 0 0 0 1px #eee; }
.sel::after { content: ""; position: absolute; right: -3px; bottom: -3px; width: 5px; height: 5px; background: #0d6b37; outline: 1px solid #eee; }
.t { text-align: left; vertical-align: bottom; padding-left: 3px; font-size: 17px; }
.spill { border-right-color: transparent; white-space: nowrap; }
.vscroll { width: 18px; margin: 2px 0 1px 3px; background: #c6c6c6; display: flex; flex-direction: column; }
.arrow { width: 18px; height: 18px; background: #f0f0f0; border: 1px solid #a9a9a9; display: flex; align-items: center; justify-content: center; flex: none; }
.thumb { height: 576px; background: #f0f0f0; border: 1px solid #a9a9a9; margin-bottom: auto; }

.ink { position: absolute; left: 1280px; top: 84px; }
.ime { position: absolute; left: 1569px; top: 660px; width: 265px; height: 38px; border: 2px solid #222; background: linear-gradient(#efefef 50%, #dadada 50%); display: flex; align-items: center; padding-left: 6px; }
.ime svg:nth-child(2) { margin-left: 10px; }
.ime svg:nth-child(3) { margin-left: 13px; }
.ime svg:nth-child(4) { margin-left: 17px; }
.ime svg:nth-child(5) { margin-left: 19px; }
.ime svg:nth-child(6) { margin-left: 18px; }
.tm { font: 5px "Open Sans", sans-serif; fill: #555; }

/* sheet tabs */
.sheetbar { height: 29px; flex: none; display: flex; border-bottom: 1px solid #ababab; font: 17px/21px "Open Sans", sans-serif; color: #2a2a2a; }
.nav { margin: 7px 0 0 27px; }
.sheetbar a { height: 21px; margin-top: 3px; padding: 0 0 0 12px; line-height: 13px; }
.sheetbar a:nth-of-type(1) { margin-left: 40px; border-left: 1px solid #8d8d8d; width: 82px; }
.sheetbar a.on { background: #efefef; color: #0d6b37; border: solid #999; border-width: 0 1px; border-bottom: 2px solid #0d6b37; margin-top: -1px; height: 26px; line-height: 21px; width: 83px; }
.sheetbar a.end { border-right: 1px solid #8d8d8d; width: 81px; }
.plus { margin: 4px 0 0 33px; }
.hscroll { margin-left: auto; margin-right: 26px; display: flex; margin-top: 4px; height: 18px; }
.hscroll .dots { margin: 3px 16px 0 0; }
.track { width: 691px; background: #c6c6c6; }
.hthumb { display: block; width: 661px; height: 18px; background: #efefef; border: 1px solid #a3a3a3; }

.status { height: 27px; flex: none; background: #e3e3e3; display: flex; align-items: center; padding-left: 1554px; }
.view { width: 48px; height: 27px; display: grid; place-items: center; padding: 0 1px 1px 0; }
.view.on { background: #b8b8b8; }
.zoom { margin-left: 5px; }
.pc { font: 16px "Open Sans", sans-serif; margin-left: 13px; }

.taskbar { height: 25px; flex: none; background: #1c1f21; border-bottom: 1px solid #4a5050; display: flex; }
.hl { background: #3a3c3e; }
.tray { margin-left: auto; }
.pen { height: 25px; flex: none; background: #000; display: flex; font: 13.33px/20px "Liberation Mono", "Noto Sans CJK SC", monospace; color: #ddd; white-space: nowrap; }
.pa { font: 700 19px "Liberation Serif", serif; fill: #1fe51f; }
.pfont, .psize, .pcolor { display: flex; border: 1px solid #ccc; height: 22px; margin-top: 2px; justify-content: space-between; }
.pfont { width: 120px; margin-left: 2px; }
.pfont span { width: 96px; letter-spacing: -.05px; }
.pen em { width: 21px; flex: none; border: 1px solid currentColor; display: grid; place-items: center; margin: 1px; }
.psize, .pcolor { border-color: #0c0; color: #0c0; width: 48px; margin-left: 8px; }
.psize span { padding-left: 3px; }
.pcolor { width: 64px; height: 20px; }
.pcolor b { width: 35px; height: 12px; margin: 3px; background: #e00000; border: 1px solid #ddd; }
.credit { margin: 1px 33px 0 auto; color: #21c821; }
.cn { font-size: 15px; font-weight: 300; }
```
